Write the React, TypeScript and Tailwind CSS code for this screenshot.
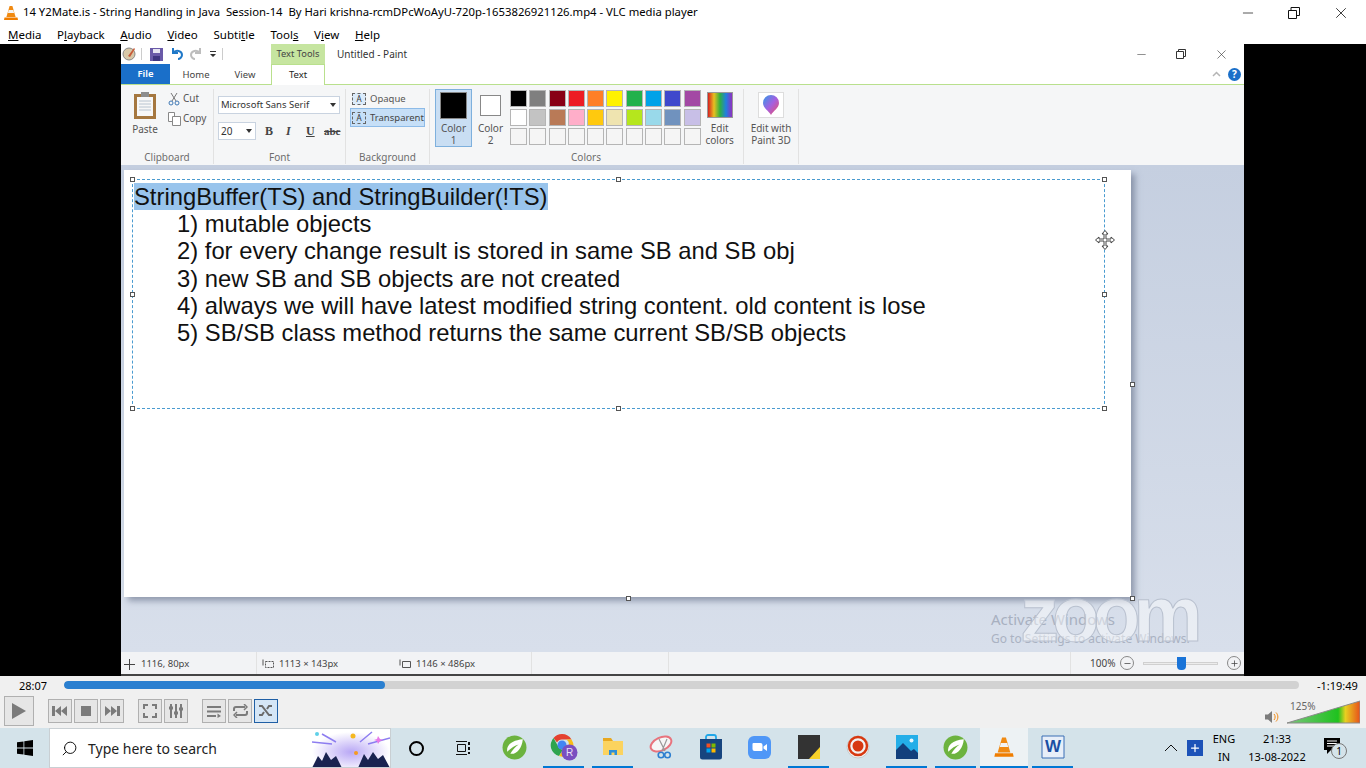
import { Minus, Plus, Search, X } from 'lucide-react';

const row1 = ['#000000', '#7f7f7f', '#880015', '#ed1c24', '#ff7f27', '#fff200', '#22b14c', '#00a2e8', '#3f48cc', '#a349a4'];
const row2 = ['#ffffff', '#c3c3c3', '#b97a57', '#ffaec9', '#ffc90e', '#efe4b0', '#b5e61d', '#99d9ea', '#7092be', '#c8bfe7'];
const row3 = ['#f5f5f5', '#f5f5f5', '#f5f5f5', '#f5f5f5', '#f5f5f5', '#f5f5f5', '#f5f5f5', '#f5f5f5', '#f5f5f5', '#f5f5f5'];

const lines = [
  '1) mutable objects',
  '2) for every change result is stored in same SB and SB obj',
  '3) new SB and SB objects are not created',
  '4) always we will have latest modified string content. old content is lose',
  '5) SB/SB class method returns the same current SB/SB objects',
];

function Cone({ size = 16 }: { size?: number }) {
  return (
    <svg width={size} height={size} viewBox="0 0 16 16">
      <path d="M6.6 1h2.8l3.2 11H3.4z" fill="#f08a12" />
      <path d="M5.7 5h4.6l.8 3H4.9z" fill="#f3f3f3" />
      <path d="M1.5 12.5h13l.5 2.5H1z" fill="#ef7d00" />
    </svg>
  );
}

function Leaf() {
  return (
    <svg width="25" height="25" viewBox="0 0 24 24">
      <circle cx="12" cy="12" r="11.5" fill="#6cb33f" />
      <path d="M5 16c-1-6 4-11 15-12-1 9-6 15-12 14 2-4 5-7 8-9-4 1-8 4-11 7z" fill="#fff" />
    </svg>
  );
}

function Chrome() {
  return (
    <svg width="28" height="28" viewBox="0 0 28 28">
      <path d="M12 1a11 11 0 0 1 9.5 5.5H12a5.5 5.5 0 0 0-5 3L3.500 5A11 11 0 0 1 12 1z" fill="#e4412f" />
      <path d="M3.500 5L8 13a5 5 0 0 0 5 3.400L9 23A11 11 0 0 1 3.500 5z" fill="#2fa44f" />
      <path d="M21.500 6.500A11 11 0 0 1 9 23l5-7a5 5 0 0 0 2-9.500z" fill="#f9bc15" />
      <circle cx="12" cy="12" r="4.500" fill="#4285f4" />
      <circle cx="19.500" cy="19.500" r="8" fill="#7a4fc0" />
      <text x="19.500" y="23" fontSize="10" textAnchor="middle" fill="#e8e0f8" fontFamily="Liberation Sans, sans-serif">R</text>
    </svg>
  );
}

function Explorer() {
  return (
    <svg width="22" height="22" viewBox="0 0 22 22">
      <path d="M1 2h8l2 3H1z" fill="#e8a820" />
      <path d="M1 5h20v14H1z" fill="#fbd35f" />
      <path d="M7 14h8v5H7z" fill="#2b8fd8" />
      <path d="M9.500 16.500h3V19h-3z" fill="#fbd35f" />
    </svg>
  );
}

function Snip() {
  return (
    <svg width="26" height="26" viewBox="0 0 26 26" fill="none">
      <ellipse cx="12" cy="10" rx="11" ry="6.500" stroke="#e8737d" strokeWidth="2" transform="rotate(-25 12 10)" fill="#f6f6f6" />
      <path d="M10 5l6 12M18 5l-5 12" stroke="#999" strokeWidth="1.200" />
      <circle cx="12" cy="21" r="2.800" stroke="#2d7fd0" strokeWidth="1.600" />
      <circle cx="18.500" cy="21" r="2.800" stroke="#2d7fd0" strokeWidth="1.600" />
    </svg>
  );
}

function Store() {
  return (
    <svg width="24" height="26" viewBox="0 0 24 26">
      <path d="M7 6V3a2 2 0 0 1 2-2h6a2 2 0 0 1 2 2v3" fill="none" stroke="#22a7e8" strokeWidth="1.800" />
      <path d="M1 5h22v18a2.500 2.500 0 0 1-2.500 2.500h-17A2.500 2.500 0 0 1 1 23z" fill="#17457f" />
      <path d="M7.500 9.500h4v4h-4z" fill="#f25022" />
      <path d="M12.500 9.500h4v4h-4z" fill="#7fba00" />
      <path d="M7.500 14.500h4v4h-4z" fill="#00a4ef" />
      <path d="M12.500 14.500h4v4h-4z" fill="#ffb900" />
    </svg>
  );
}

function ZoomApp() {
  return (
    <svg width="23" height="25" viewBox="0 0 23 25">
      <rect x="0" y="1" width="23" height="23" rx="6" fill="#4f97f7" />
      <path d="M4.500 9a1 1 0 0 1 1-1h7a2 2 0 0 1 2 2v5a1 1 0 0 1-1 1h-7a2 2 0 0 1-2-2z" fill="#fff" />
      <path d="M15.500 11.500l3.500-2.500v7l-3.500-2.500z" fill="#fff" />
    </svg>
  );
}

function Sticky() {
  return (
    <svg width="22" height="24" viewBox="0 0 22 24">
      <path d="M0 0h22v24H0z" fill="#333" />
      <path d="M11 24h11V12z" fill="#f8d22a" />
    </svg>
  );
}

function Rec() {
  return (
    <svg width="24" height="26" viewBox="0 0 24 26">
      <circle cx="12" cy="13" r="11" fill="#f2f2f2" stroke="#c9c9c9" />
      <circle cx="12" cy="12" r="9" fill="none" stroke="#d73810" strokeWidth="2.500" />
      <circle cx="12" cy="12" r="5.500" fill="#d73810" />
    </svg>
  );
}

function Photos() {
  return (
    <svg width="22" height="24" viewBox="0 0 22 24">
      <path d="M0 0h22v24H0z" fill="#24aee8" />
      <circle cx="15.500" cy="5.500" r="2" fill="#e8f6fd" />
      <path d="M0 24V15l7-7 8 8 3-2 4 4v6z" fill="#123f7c" />
    </svg>
  );
}

function Word() {
  return (
    <svg width="24" height="24" viewBox="0 0 24 24">
      <path d="M1 1h22v22H1z" fill="#e8eff9" stroke="#3b6fb5" />
      <text x="12" y="17" fontSize="17" fontWeight="700" textAnchor="middle" fill="#1c4fa3" fontFamily="Liberation Sans, sans-serif">W</text>
    </svg>
  );
}

function Handle({ className }: { className: string }) {
  return <span className={`absolute h-[5px] w-[5px] border border-[#555] bg-white ${className}`} />;
}

function CtrlButton({ children, checked }: { children: React.ReactNode; checked?: boolean }) {
  return (
    <div
      className={`flex h-6 w-6 items-center justify-center border ${
        checked ? 'border-[#1f5fa5] bg-[#d5e6f6]' : 'border-[#b0b0b0] bg-[#e6e6e6]'
      }`}
    >
      {children}
    </div>
  );
}

function TaskItem({ children, line }: { children: React.ReactNode; line?: boolean }) {
  return (
    <div className={`mx-1 flex h-10 w-[41px] shrink-0 items-center justify-center border-b-2 ${line ? 'border-[#0078d4]' : 'border-transparent'}`}>
      {children}
    </div>
  );
}

function Group({ label, w, children }: { label: string; w: string; children: React.ReactNode }) {
  return (
    <div className={`flex h-[75px] shrink-0 flex-col border-r border-[#e2e2e2] ${w}`}>
      <div className="min-h-0 flex-1">{children}</div>
      <div className="pb-px text-center text-[10px] leading-[12px] text-[#6d6d6d]">{label}</div>
    </div>
  );
}

export default function App() {
  return (
    <div className="relative flex h-[768px] w-[1366px] flex-col overflow-hidden bg-black font-['Noto_Sans',sans-serif] text-black">
      {/* VLC title */}
      <div className="flex h-[25px] shrink-0 items-center bg-white pl-[3px]">
        <Cone />
        <span className="ml-1 whitespace-pre text-[11.300px]">14 Y2Mate.is - String Handling in Java  Session-14  By Hari krishna-rcmDPcWoAyU-720p-1653826921126.mp4 - VLC media player</span>
        <div className="ml-auto flex items-center gap-[31px] pr-4">
          <Minus size={16} strokeWidth={1} />
          <svg width="14" height="14" viewBox="0 0 14 14" fill="none" stroke="#111">
            <path d="M1.500 4.500h8v8h-8zM4 4.500V1.500h8.500v8H9.500" />
          </svg>
          <X size={18} strokeWidth={1} />
        </div>
      </div>
      <div className="flex h-[19px] shrink-0 items-center gap-[15.700px] bg-white pl-2 text-[11.500px]">
        <span><u>M</u>edia</span>
        <span>P<u>l</u>ayback</span>
        <span><u>A</u>udio</span>
        <span><u>V</u>ideo</span>
        <span>Subti<u>t</u>le</span>
        <span>Tool<u>s</u></span>
        <span>V<u>i</u>ew</span>
        <span><u>H</u>elp</span>
      </div>

      {/* Video area */}
      <div className="flex h-[632px] shrink-0 bg-black pl-[121px]">
        <div className="flex w-[1123px] flex-col bg-white">
          {/* Quick access */}
          <div className="flex h-5 shrink-0 items-center text-[#333]">
            <svg className="ml-px" width="14" height="14" viewBox="0 0 14 14">
              <circle cx="7" cy="7" r="6" fill="#d8c8a8" stroke="#888" />
              <path d="M6 9l6-8 1 1-5 8z" fill="#c75b39" />
            </svg>
            <span className="ml-[5px] h-3 w-px bg-[#ccc]" />
            <svg className="ml-[8px]" width="13" height="13" viewBox="0 0 13 13">
              <path d="M0 0h13v13H0z" fill="#6a5aa8" />
              <path d="M3 1h7v4H3z" fill="#e6e4f2" />
              <path d="M3 8h7v5H3z" fill="#3f3580" />
            </svg>
            <svg className="ml-[7px]" width="14" height="14" viewBox="0 0 14 14" fill="none" stroke="#1f78c8" strokeWidth="2">
              <path d="M3 1v5h5M3 6c3-4 9-2 9 2 0 2-2 4-4 4" />
            </svg>
            <svg className="ml-[5px]" width="14" height="14" viewBox="0 0 14 14" fill="none" stroke="#bdbdbd" strokeWidth="2">
              <path d="M11 1v5H6M11 6C8 2 2 4 2 8c0 2 2 4 4 4" />
            </svg>
            <svg className="ml-[6px]" width="8" height="8" viewBox="0 0 8 8" fill="#333">
              <path d="M1 1h6v1H1zM1 4h6L4 7z" />
            </svg>
            <span className="ml-[5px] h-3 w-px bg-[#ccc]" />
            <div className="ml-[48px] flex h-5 w-[54px] items-center justify-center bg-[#c6e5a0] pb-px text-[9.300px] text-[#444]">Text Tools</div>
            <span className="ml-3 text-[10px] text-[#333]">Untitled - Paint</span>
            <div className="ml-auto flex items-center gap-[28px] pr-[15px]">
              <Minus size={13} strokeWidth={1} />
              <svg width="10" height="10" viewBox="0 0 10 10" fill="none" stroke="#333">
                <path d="M.5 2.500h7v7h-7zM2.500 2.500v-2h7v7h-2" />
              </svg>
              <X size={15} strokeWidth={1} />
            </div>
          </div>
          {/* Tabs */}
          <div className="flex h-[21px] shrink-0 items-stretch border-b border-[#b9e08d] text-[9.500px] text-[#444]">
            <div className="flex w-[49px] items-center justify-center bg-[#1a6fc9] pt-px font-semibold text-white">File</div>
            <div className="ml-[13px] flex w-[26px] items-center justify-center pt-[2px]">Home</div>
            <div className="ml-[25px] flex w-[22px] items-center justify-center pt-[2px]">View</div>
            <div className="ml-[15px] flex h-[21px] w-[54px] items-center justify-center border-x border-t border-[#b9e08d] bg-white pt-px text-[#222]">Text</div>
            <div className="ml-auto flex items-center gap-[7px] pr-[3px]">
              <svg width="9" height="6" viewBox="0 0 9 6" fill="none" stroke="#b5b5b5" strokeWidth="1.500">
                <path d="M1 5l3.500-3.500L8 5" />
              </svg>
              <span className="flex h-[13px] w-[13px] items-center justify-center rounded-full bg-[#1a6fc9] text-[10px] font-bold leading-none text-white">?</span>
            </div>
          </div>

          {/* Ribbon */}
          <div className="flex h-[80px] shrink-0 items-start bg-[#f5f6f7] pt-1 text-[10px] text-[#555]">
            <Group label="Clipboard" w="w-[93px]">
              <div className="flex pl-3 pt-[2px]">
                <div className="flex w-[24px] flex-col items-center">
                  <svg width="24" height="28" viewBox="0 0 24 28">
                    <path d="M1 3h22v25H1z" fill="#a5773f" />
                    <path d="M4 6h16v19H4z" fill="#f7f7f7" />
                    <path d="M6 10h12M6 13h12M6 16h12M6 19h12" stroke="#b8c4d0" />
                    <path d="M8 1h8v5H8z" fill="#8d8d8d" />
                  </svg>
                  <span className="mt-[3px]">Paste</span>
                </div>
                <div className="ml-[11px] flex flex-col gap-[5px]">
                  <div className="flex items-center gap-[3px]">
                    <svg width="12" height="14" viewBox="0 0 12 14" fill="none" stroke="#3f78b5">
                      <path d="M3 1l5 8M9 1L4 9" stroke="#777" />
                      <circle cx="3" cy="11" r="2" />
                      <circle cx="9" cy="11" r="2" />
                    </svg>
                    <span>Cut</span>
                  </div>
                  <div className="flex items-center gap-[2px]">
                    <svg width="13" height="14" viewBox="0 0 13 14" fill="#fff" stroke="#888">
                      <path d="M.5.500h6v9h-6z" />
                      <path d="M4.500 4.500h8v9h-8z" />
                    </svg>
                    <span>Copy</span>
                  </div>
                </div>
              </div>
            </Group>
            <Group label="Font" w="w-[132px]">
              <div className="pl-[4px] pt-[7px]">
                <div className="flex h-[18px] w-[122px] items-center justify-between border border-[#c9d3e0] bg-white pl-[2px] pr-[3px] text-[#333]">
                  <span className="text-[9.500px]">Microsoft Sans Serif</span>
                  <svg width="6" height="4" viewBox="0 0 6 4" fill="#333"><path d="M0 0h6L3 4z" /></svg>
                </div>
                <div className="mt-2 flex items-center">
                  <div className="flex h-[18px] w-[38px] items-center justify-between border border-[#c9d3e0] bg-white pl-[2px] pr-[3px] text-[#333]">
                    <span>20</span>
                    <svg width="6" height="4" viewBox="0 0 6 4" fill="#333"><path d="M0 0h6L3 4z" /></svg>
                  </div>
                  <span className="ml-[9px] w-[21px] font-['Liberation_Serif',serif] text-[12px] font-bold text-[#444]">B</span>
                  <span className="w-[20px] font-['Liberation_Serif',serif] text-[12px] font-bold italic text-[#444]">I</span>
                  <span className="w-[18px] font-['Liberation_Serif',serif] text-[12px] font-bold text-[#444] underline">U</span>
                  <span className="font-['Liberation_Serif',serif] text-[11px] font-bold text-[#444] line-through">abc</span>
                </div>
              </div>
            </Group>
            <Group label="Background" w="w-[84px]">
              <div className="pl-1 text-[9.500px]">
                <div className="flex h-[19px] items-center gap-[4px] pl-[2px]">
                  <span className="flex h-[12px] w-[14px] items-center justify-center border border-dashed border-[#666] bg-[#dcebfa] text-[8px] leading-none text-[#333]">A</span>
                  <span className="pt-[2px]">Opaque</span>
                </div>
                <div className="flex h-[19px] w-[75px] items-center gap-[4px] border border-[#8dbbe8] bg-[#c6dff7] pl-[1px] text-[#444]">
                  <span className="flex h-[12px] w-[14px] items-center justify-center border border-dashed border-[#666] text-[8px] leading-none text-[#333]">A</span>
                  <span className="pt-[2px]">Transparent</span>
                </div>
              </div>
            </Group>
            <div className="flex h-[75px] w-[314px] shrink-0 flex-col border-r border-[#e2e2e2] pl-[5px]">
              <div className="flex min-h-0 flex-1 items-start">
                <div className="flex h-[58px] w-[37px] flex-col items-center border border-[#7eb0dd] bg-[#c9def3] pt-[2px] leading-[12px]">
                  <span className="mb-[3px] h-[27px] w-[27px] border border-[#888] bg-black" />
                  <span>Color</span>
                  <span>1</span>
                </div>
                <div className="flex h-[58px] w-[37px] flex-col items-center pt-[6px] leading-[12px]">
                  <span className="mb-[6px] h-[21px] w-[21px] border border-[#888] bg-white" />
                  <span>Color</span>
                  <span>2</span>
                </div>
                <div className="ml-px flex flex-col gap-[2px] pt-px">
                  {[row1, row2, row3].map((row, i) => (
                    <div key={i} className="flex gap-[2.300px]">
                      {row.map((c, j) => (
                        <span key={j} className="h-[17px] w-[17px] border border-[#b5b5b5]" style={{ backgroundColor: c }} />
                      ))}
                    </div>
                  ))}
                </div>
                <div className="ml-1 flex w-[30px] flex-col items-center leading-[12px]">
                  <span className="mb-1 mt-[3px] h-[26px] w-[26px] border border-[#999] bg-[linear-gradient(90deg,#d62020,#e8c020,#30b040,#2080e0,#9030c0)]" />
                  <span>Edit</span>
                  <span>colors</span>
                </div>
              </div>
              <div className="pb-px pr-[6px] text-center leading-[12px] text-[#6d6d6d]">Colors</div>
            </div>
            <div className="flex h-[75px] w-[55px] shrink-0 flex-col items-center border-r border-[#e2e2e2] leading-[12px]">
              <span className="mb-1 mt-[3px] flex h-[26px] w-[26px] items-center justify-center border border-[#ddd] bg-white">
                <svg width="16" height="20" viewBox="0 0 16 20">
                  <defs>
                    <linearGradient id="p3d" x1="0" y1="0" x2="1" y2="1">
                      <stop offset="0" stopColor="#2f9be8" />
                      <stop offset="0.5" stopColor="#a55fe0" />
                      <stop offset="1" stopColor="#ef4f5f" />
                    </linearGradient>
                  </defs>
                  <path d="M8 0a8 8 0 0 1 8 8c0 5-6 8-8 12C6 16 0 13 0 8a8 8 0 0 1 8-8z" fill="url(#p3d)" />
                </svg>
              </span>
              <span>Edit with</span>
              <span>Paint 3D</span>
            </div>
          </div>

          {/* Canvas */}
          <div className="flex min-h-0 flex-1 bg-[linear-gradient(180deg,#c5cfe0,#d8dfeb)] pl-[3px] pt-[5px]">
            <div className="relative h-[427px] w-[1007px] bg-white pl-[10px] pt-[13px] font-['Liberation_Sans',sans-serif] text-[23.800px] leading-[27.200px] text-[#111] shadow-[4px_4px_6px_rgba(90,100,125,0.55)]">
              <div><span className="bg-[#99c4ec]">StringBuffer(TS) and StringBuilder(!TS)</span></div>
              <div className="pl-[43px]">
                {lines.map((l) => (
                  <div key={l}>{l}</div>
                ))}
              </div>
              {/* text selection box */}
              <div className="absolute left-2 top-[9px] h-[230px] w-[973px] border border-dashed border-[#4a9bd0]">
                <Handle className="-left-[3px] -top-[3px]" />
                <Handle className="left-[483px] -top-[3px]" />
                <Handle className="-right-[3px] -top-[3px]" />
                <Handle className="-left-[3px] top-[112px]" />
                <Handle className="-right-[3px] top-[112px]" />
                <Handle className="-left-[3px] -bottom-[3px]" />
                <Handle className="left-[483px] -bottom-[3px]" />
                <Handle className="-right-[3px] -bottom-[3px]" />
                <svg className="absolute -right-[11px] top-[50px]" width="20" height="20" viewBox="0 0 20 20" fill="#fff" stroke="#444" strokeWidth="1">
                  <path d="M10 .5l3 3.500h-2v5h5V7l3.500 3-3.500 3v-2h-5v5h2l-3 3.500L7 16h2v-5H4v2L.5 10 4 7v2h5V4H7z" />
                </svg>
              </div>
              <Handle className="left-[502px] -bottom-[4px]" />
              <Handle className="-right-[4px] -bottom-[4px]" />
              <Handle className="-right-[4px] top-[212px]" />
            </div>
          </div>

          {/* Status bar */}
          <div className="flex h-6 shrink-0 items-center border-b-2 border-[#444] bg-[#f2f3f5] text-[9.500px] text-[#444]">
            <div className="flex h-full w-[136px] items-center gap-[6px] border-r border-[#e2e2e2] pl-[3px] pt-[2px]">
              <svg width="11" height="11" viewBox="0 0 11 11" fill="none" stroke="#444">
                <path d="M5.500 0v11M0 5.500h11" />
              </svg>
              <span>1116, 80px</span>
            </div>
            <div className="flex h-full w-[137px] items-center gap-[5px] pl-[5px] pt-[2px]">
              <svg width="12" height="11" viewBox="0 0 12 11" fill="none" stroke="#555">
                <path d="M3.500 2.500h8v6h-8z" strokeDasharray="2 1" />
                <path d="M1 .5v6" />
              </svg>
              <span>1113 × 143px</span>
            </div>
            <div className="flex h-full w-[138px] items-center gap-[5px] border-r border-[#e2e2e2] pl-[5px] pt-[2px]">
              <svg width="12" height="11" viewBox="0 0 12 11" fill="none" stroke="#555">
                <path d="M3.500 2.500h8v6h-8z" />
                <path d="M1 .5v6" />
              </svg>
              <span>1146 × 486px</span>
            </div>
            <div className="h-full w-[137px] border-r border-[#e2e2e2]" />
            <div className="h-full w-[402px] border-r border-[#e2e2e2]" />
            <span className="ml-[19px] text-[10px]">100%</span>
            <span className="ml-[5px] flex h-[14px] w-[14px] items-center justify-center rounded-full border border-[#888]">
              <Minus size={9} />
            </span>
            <div className="relative ml-[9px] h-[3px] w-[75px] border border-[#d0d0d0] bg-[#ececec]">
              <span className="absolute -top-[6px] left-[33px] h-[13px] w-[9px] rounded-b-[4px] bg-[#1a74d8]" />
            </div>
            <span className="ml-[9px] flex h-[14px] w-[14px] items-center justify-center rounded-full border border-[#888]">
              <Plus size={9} />
            </span>
          </div>
        </div>
      </div>

      {/* VLC controls */}
      <div className="flex h-[52px] shrink-0 flex-col bg-[#f0f0f0]">
        <div className="flex h-[21px] items-start text-[11px] leading-[20px]">
          <span className="ml-[19px] w-[45px]">28:07</span>
          <div className="mt-[5px] h-2 w-[1235px] overflow-hidden rounded-[4px] bg-[#d2d2d2]">
            <div className="h-full w-[321px] rounded-[4px] bg-[#2a7fd0]" />
          </div>
          <span className="ml-[18px]">-1:19:49</span>
        </div>
        <div className="flex flex-1 items-center pb-[2px] pl-1">
          <div className="flex h-[30px] w-[30px] items-center justify-center border border-[#b0b0b0] bg-[#e6e6e6]">
            <svg width="14" height="16" viewBox="0 0 14 16" fill="#7b7b7b"><path d="M0 0l14 8-14 8z" /></svg>
          </div>
          <div className="ml-[14px] flex gap-[2px]">
            <CtrlButton>
              <svg width="16" height="10" viewBox="0 0 16 10" fill="#7b7b7b"><path d="M0 0h3v10H0zM3 5l6-5v10zM9 5l6-5v10z" /></svg>
            </CtrlButton>
            <CtrlButton>
              <span className="h-[10px] w-[10px] bg-[#7b7b7b]" />
            </CtrlButton>
            <CtrlButton>
              <svg width="16" height="10" viewBox="0 0 16 10" fill="#7b7b7b"><path d="M16 0h-3v10h3zM13 5L7 0v10zM7 5L1 0v10z" /></svg>
            </CtrlButton>
          </div>
          <div className="ml-[14px] flex gap-[2px]">
            <CtrlButton>
              <svg width="14" height="14" viewBox="0 0 14 14" fill="none" stroke="#7b7b7b" strokeWidth="2">
                <path d="M1 5V1h4M9 1h4v4M13 9v4H9M5 13H1V9" />
              </svg>
            </CtrlButton>
            <CtrlButton>
              <svg width="16" height="14" viewBox="0 0 16 14" stroke="#7b7b7b" strokeWidth="2" fill="#7b7b7b">
                <path d="M3 0v14M8 0v14M13 0v14" />
                <path d="M1 4h4M6 9h4M11 5h4" strokeWidth="3" />
              </svg>
            </CtrlButton>
          </div>
          <div className="ml-[14px] flex gap-[2px]">
            <CtrlButton>
              <svg width="14" height="13" viewBox="0 0 14 13" fill="#7b7b7b">
                <path d="M0 1h14v2H0zM0 5.500h14v2H0zM0 10h9v2H0zM10.500 8.500l3.500 2.500-3.500 2z" />
              </svg>
            </CtrlButton>
            <CtrlButton>
              <svg width="15" height="14" viewBox="0 0 15 14" fill="none" stroke="#7b7b7b" strokeWidth="2">
                <path d="M1 7V5a2 2 0 0 1 2-2h9M14 7v2a2 2 0 0 1-2 2H3" />
                <path d="M11 0l3 3-3 3M4 8l-3 3 3 3" strokeWidth="1.500" />
              </svg>
            </CtrlButton>
            <CtrlButton checked>
              <svg width="15" height="14" viewBox="0 0 15 14" fill="none" stroke="#6b6b6b" strokeWidth="2">
                <path d="M0 2h3l7 9h3M0 11h3l2-3M8 5l2-3h3" />
              </svg>
            </CtrlButton>
          </div>
          <div className="-mb-[2px] ml-auto flex items-end pr-[6px]">
            <svg width="14" height="14" viewBox="0 0 14 14" fill="none">
              <path d="M0 4.500h3L7 1v12L3 9.500H0z" fill="#7b7b7b" />
              <path d="M9 4c1.500 1.500 1.500 4.500 0 6M11 2.500c2.500 2.500 2.500 6.500 0 9" stroke="#f08a12" />
            </svg>
            <div className="relative ml-2 h-[24px] w-[73px]">
              <svg width="73" height="24" viewBox="0 0 73 24">
                <defs>
                  <linearGradient id="vol" x1="0" y1="0" x2="1" y2="0">
                    <stop offset="0" stopColor="#7cc47c" />
                    <stop offset="0.7" stopColor="#1fc21f" />
                    <stop offset="0.8" stopColor="#e8d020" />
                    <stop offset="1" stopColor="#e8501a" />
                  </linearGradient>
                </defs>
                <path d="M0 23L73 1v22z" fill="url(#vol)" stroke="#8a8a8a" />
              </svg>
              <span className="absolute left-[3px] -top-[1px] text-[10px] text-[#666]">125%</span>
            </div>
          </div>
        </div>
      </div>

      {/* Taskbar */}
      <div className="flex h-10 shrink-0 items-center bg-[#d4e3ea]">
        <div className="flex w-[49px] shrink-0 justify-center">
          <svg width="16" height="16" viewBox="0 0 16 16" fill="#000">
            <path d="M0 2.300l6.500-.9v6.200H0zM7.300 1.300L16 0v7.600H7.300zM0 8.400h6.500v6.200L0 13.700zM7.300 8.400H16V16l-8.700-1.200z" />
          </svg>
        </div>
        <div className="flex h-10 w-[342px] shrink-0 items-center overflow-hidden border border-[#c9cfd3] bg-white pl-[11px]">
          <Search size={17} strokeWidth={1.300} className="-scale-x-100" />
          <span className="ml-[10px] text-[14px] text-[#222]">Type here to search</span>
          <svg className="ml-auto" width="78" height="40" viewBox="0 0 78 40">
            <defs>
              <radialGradient id="glow" cx="0.5" cy="0.6" r="0.5">
                <stop offset="0" stopColor="#b9a8f5" />
                <stop offset="1" stopColor="#ffffff" />
              </radialGradient>
            </defs>
            <rect width="78" height="40" fill="url(#glow)" />
            <path d="M0 40l6-12 4 5 4-9 5 8 5-4 6 12zM46 40l6-14 4 6 5-8 5 7 5-4 7 13z" fill="#1a2350" />
            <path d="M10 6l14 8M60 4L48 14M0 14l20 2M78 10L56 16" stroke="#8d7df0" strokeWidth="1.500" />
            <circle cx="41" cy="8" r="2.500" fill="#f5b820" />
            <circle cx="44" cy="25" r="2" fill="#f59a20" />
            <circle cx="5" cy="6" r="2" fill="#5fd0e8" />
            <path d="M66 8l2 3 3 1-3 1-2 3-1-3-3-1 3-1z" fill="#e878e8" />
          </svg>
        </div>
        <div className="flex w-[50px] shrink-0 justify-center">
          <span className="h-[15px] w-[15px] rounded-full border-2 border-black" />
        </div>
        <div className="flex w-[44px] shrink-0 justify-center">
          <svg width="16" height="16" viewBox="0 0 16 16" fill="none" stroke="#111">
            <path d="M2.500 4.500h8v7h-8zM1 1.500h11M1 14.500h11" />
            <path d="M14 2v3M14 7v3M14 12v2" strokeWidth="2" />
          </svg>
        </div>
        <div className="ml-[5px] flex shrink-0 items-center">
          <TaskItem><Leaf /></TaskItem>
          <TaskItem line><Chrome /></TaskItem>
          <TaskItem line><Explorer /></TaskItem>
          <TaskItem><Snip /></TaskItem>
          <TaskItem><Store /></TaskItem>
          <TaskItem><ZoomApp /></TaskItem>
          <TaskItem line><Sticky /></TaskItem>
          <TaskItem><Rec /></TaskItem>
          <TaskItem line><Photos /></TaskItem>
          <TaskItem line><Leaf /></TaskItem>
          <div className="flex h-10 w-[48px] shrink-0 items-center justify-center border-b-2 border-[#0078d4] bg-[#edf2f4]">
            <Cone size={22} />
          </div>
          <TaskItem line><Word /></TaskItem>
        </div>
        <div className="ml-auto flex items-center pr-[19px]">
          <svg width="14" height="8" viewBox="0 0 14 8" fill="none" stroke="#111"><path d="M1 7l6-6 6 6" /></svg>
          <span className="ml-[9px] flex h-4 w-4 items-center justify-center bg-[#1c52b8]">
            <Plus size={12} color="#fff" strokeWidth={2.500} />
          </span>
          <div className="ml-[5px] flex w-[32px] flex-col items-center text-[11px] leading-[18px]">
            <span>ENG</span>
            <span>IN</span>
          </div>
          <div className="ml-px flex w-[72px] flex-col items-center text-[11px] leading-[18px]">
            <span>21:33</span>
            <span>13-08-2022</span>
          </div>
          <div className="relative ml-[10px] h-[22px] w-[24px]">
            <svg width="18" height="18" viewBox="0 0 18 18" fill="#000">
              <path d="M1 1h16v12H8l-4 4v-4H1z" />
              <path d="M4 4h10M4 6.500h10M4 9h7" stroke="#fff" />
            </svg>
            <span className="absolute bottom-0 right-0 flex h-4 w-4 items-center justify-center rounded-full border border-[#777] bg-[#d4e3ea] text-[10px] leading-none">1</span>
          </div>
        </div>
      </div>

      {/* watermark overlays */}
      <span className="absolute left-[991px] top-[608px] text-[15px] text-[#a8b0c0]">Activate Windows</span>
      <span className="absolute left-[991px] top-[630px] text-[12px] text-[#aab2c2]">Go to Settings to activate Windows.</span>
      <span className="absolute left-[1020px] top-[564px] font-['Liberation_Sans',sans-serif] text-[78px] font-bold leading-[100px] tracking-[-7px] text-white/45 [-webkit-text-stroke:1px_#b9c1cf]">zoom</span>
    </div>
  );
}
